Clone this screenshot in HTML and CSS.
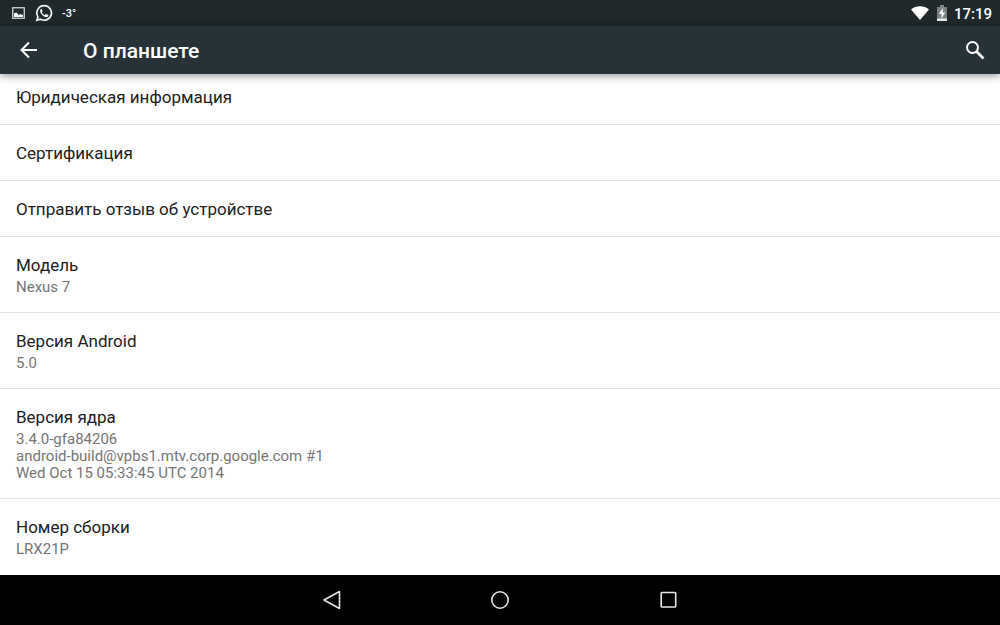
FILE: index.html
```html
<!DOCTYPE html>
<html lang="ru">
<head>
<meta charset="utf-8">
<meta name="viewport" content="width=device-width, initial-scale=1">
<title>О планшете</title>
<link rel="stylesheet" href="styles.css">
</head>
<body>
<div class="status">
  <svg class="status-picture" width="13" height="12" viewBox="0 0 13 12" aria-hidden="true"><rect x=".75" y=".75" width="11.5" height="10.5" fill="none" stroke="#d3d8d9" stroke-width="1.3"/><path d="M2 10V6.500l2.500-1 2.200 2.500 1.500-1L11 8v2z" fill="#fff"/></svg>
  <svg class="status-chat" width="18" height="18" viewBox="0 0 24 24" aria-hidden="true"><path d="M12.200 2.200a9.700 9.700 0 0 0-8.300 14.700L2.500 21.600l4.900-1.300A9.700 9.700 0 1 0 12.200 2.200z" fill="none" stroke="#f0f3f3" stroke-width="2.300"/><path d="M8.300 6.500c-1 .5-1.600 1.500-1.500 2.700.3 3.700 4.400 7.800 8.200 8.300 1.300.1 2.600-.7 2.900-1.800.2-.6.100-.9-.3-1.100l-2.400-1.200c-.4-.2-.7-.1-1 .3l-.9 1.100c-1.900-.7-3.300-2-4.200-3.900l.8-1c.2-.3.2-.6.100-.9L9 6.900c-.1-.4-.3-.5-.7-.4z" fill="#f0f3f3"/></svg>
  <span class="temperature">-3°</span>
  <svg class="status-wifi" width="18" height="14" viewBox="0 0 18 14" aria-hidden="true"><path d="M0 3.400C5-.9 13-.9 18 3.400L9 14z" fill="#fff"/></svg>
  <svg class="status-battery" width="10" height="16" viewBox="0 0 10 16" aria-hidden="true"><path d="M0 2h3V0h4v2h3v14H0z" fill="#7b8386"/><path d="M0 13.500h10V16H0z" fill="#e9eded"/><path d="M5.800 3 2 9h2.500v4.500L8.300 7.500H5.800z" fill="#fff"/></svg>
  <time class="clock">17:19</time>
</div>
<header class="bar">
  <button class="icon-button" aria-label="Назад"><svg width="18" height="18" viewBox="0 0 18 18"><path d="M17 9H2M9 1.500 1.500 9 9 16.500" fill="none" stroke="#fff" stroke-width="2"/></svg></button>
  <h1 class="bar-title">О планшете</h1>
  <button class="icon-button" aria-label="Поиск"><svg width="20" height="20" viewBox="0 0 20 20"><circle cx="7.500" cy="7.500" r="5.500" fill="none" stroke="#fff" stroke-width="2"/><path d="m11.500 11.500 7 7" stroke="#fff" stroke-width="2.600"/></svg></button>
</header>
<main class="list">
  <section class="row row-cut"><h2 class="name">Юридическая информация</h2></section>
  <section class="row"><h2 class="name">Сертификация</h2></section>
  <section class="row"><h2 class="name">Отправить отзыв об устройстве</h2></section>
  <section class="row"><h2 class="name">Модель</h2><p class="value">Nexus 7</p></section>
  <section class="row"><h2 class="name">Версия Android</h2><p class="value">5.0</p></section>
  <section class="row"><h2 class="name">Версия ядра</h2><p class="value">3.4.0-gfa84206<br>android-build@vpbs1.mtv.corp.google.com #1<br>Wed Oct 15 05:33:45 UTC 2014</p></section>
  <section class="row"><h2 class="name">Номер сборки</h2><p class="value">LRX21P</p></section>
</main>
<nav class="navigation" aria-label="Системная навигация">
  <button class="nav-button" aria-label="Назад"><svg width="20" height="20" viewBox="0 0 20 20"><path d="M18.500 1.500v17L3 10z" fill="none" stroke="#e6e6e6" stroke-width="1.600" stroke-linejoin="round"/></svg></button>
  <button class="nav-button" aria-label="Домой"><svg width="20" height="20" viewBox="0 0 20 20"><circle cx="10" cy="10" r="8.200" fill="none" stroke="#e6e6e6" stroke-width="1.600"/></svg></button>
  <button class="nav-button" aria-label="Недавние приложения"><svg width="20" height="20" viewBox="0 0 20 20"><rect x="2.200" y="2.500" width="14.500" height="14.500" rx=".8" fill="none" stroke="#e6e6e6" stroke-width="1.600"/></svg></button>
</nav>
</body>
</html>
```
FILE: styles.css
```css
* {
  box-sizing: border-box;
}

body {
  margin: 0;
  min-height: 100vh;
  display: flex;
  flex-direction: column;
  background: #fff;
  color: #212121;
  font-family: Roboto, sans-serif;
}

h1,
h2,
p {
  margin: 0;
}

button {
  display: flex;
  align-items: center;
  justify-content: center;
  padding: 0;
  border: 0;
  background: none;
}

svg {
  display: block;
  flex: none;
}

.status {
  display: flex;
  align-items: center;
  height: 26px;
  padding: 0 8px 0 12px;
  background: #1f282b;
  color: #fff;
}

.status-chat {
  margin-left: 10px;
}

.temperature {
  margin-left: 9px;
  font-size: 11px;
  font-weight: 500;
}

.status-wifi {
  margin-left: auto;
}

.status-battery {
  margin-left: 8px;
}

.clock {
  margin-left: 7px;
  padding-top: 1px;
  font-size: 15px;
  line-height: 18px;
  font-weight: 500;
}

.bar {
  position: relative;
  display: flex;
  align-items: center;
  height: 48px;
  padding: 0 6px 0 10px;
  background: #263238;
  color: #fff;
  box-shadow: 0 2px 8px rgba(0, 0, 0, 0.4);
}

.icon-button {
  width: 38px;
  height: 48px;
}

.bar-title {
  flex: 1;
  margin-left: 35px;
  padding-top: 2px;
  font-size: 21px;
  line-height: 24px;
  font-weight: 500;
}

.list {
  flex: 1;
}

.row {
  padding: 18px 16px 16px;
  border-bottom: 1px solid #e4e4e4;
}

.row:last-child {
  border-bottom: 0;
}

.row-cut {
  padding-top: 13px;
}

.name {
  font-size: 17px;
  line-height: 21px;
  font-weight: 400;
}

.value {
  margin-top: 3px;
  color: #757575;
  font-size: 15px;
  line-height: 17px;
}

.navigation {
  display: flex;
  justify-content: center;
  gap: 109px;
  height: 50px;
  background: #000;
}

.nav-button {
  width: 60px;
}
```
